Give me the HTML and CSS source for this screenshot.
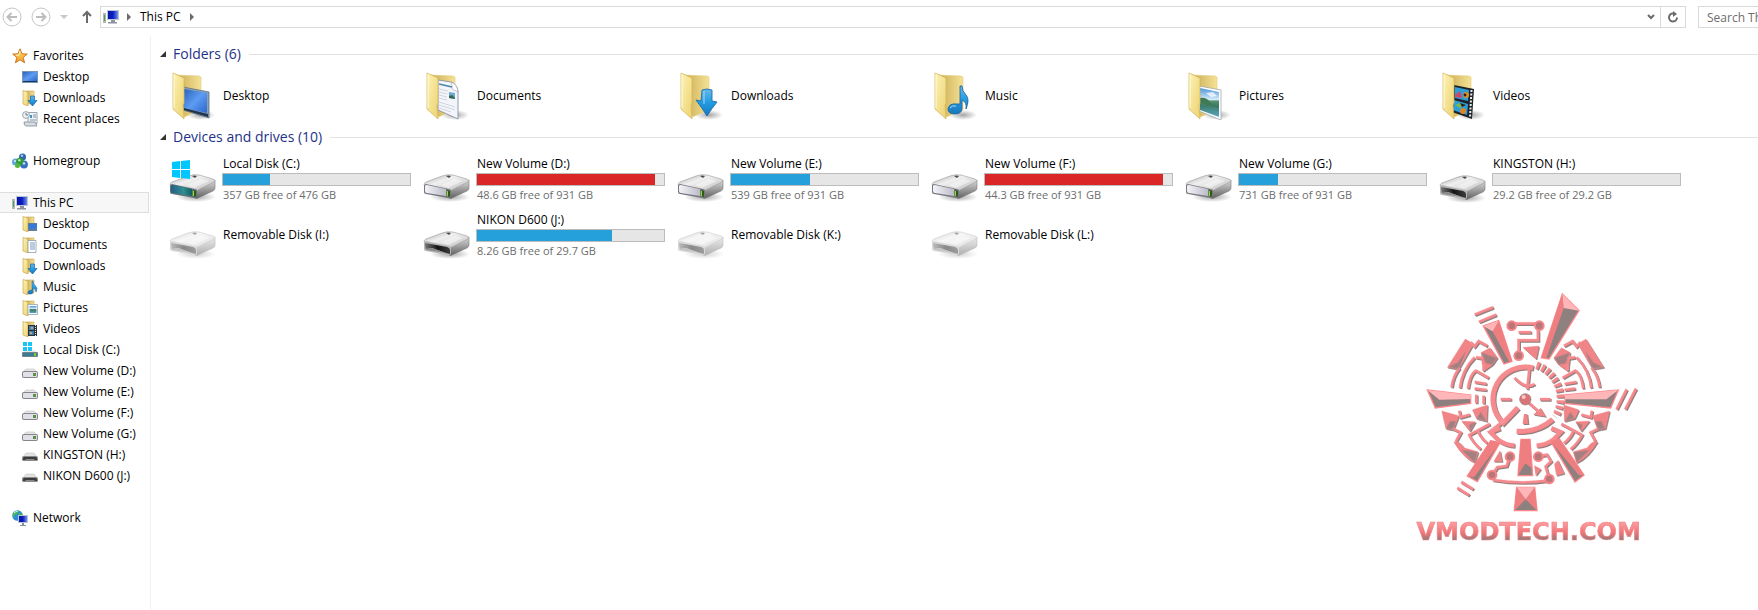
FILE: index.html
```html
<!DOCTYPE html>
<html lang="en">
<head>
    <meta charset="UTF-8">
    <meta name="viewport" content="width=device-width, initial-scale=1.0">
    <title>This PC</title>
    <link rel="stylesheet" href="styles.css">
</head>
<body>

    <!-- Icon definitions -->
    <svg class="defs" width="0" height="0" aria-hidden="true">
        <defs>
            <linearGradient id="flap" x1="0" y1="0" x2="1" y2="1">
                <stop offset="0" stop-color="#fdf3b4"/><stop offset="1" stop-color="#ecd272"/>
            </linearGradient>
            <linearGradient id="back" x1="0" y1="0" x2="1" y2="0">
                <stop offset="0" stop-color="#c9ab52"/><stop offset="1" stop-color="#f5e295"/>
            </linearGradient>
            <linearGradient id="screen" x1="0" y1="0" x2="1" y2="1">
                <stop offset="0" stop-color="#2c62bd"/><stop offset="0.5" stop-color="#5c9cf2"/><stop offset="1" stop-color="#2d66cc"/>
            </linearGradient>
            <linearGradient id="blue" x1="0" y1="0" x2="0" y2="1">
                <stop offset="0" stop-color="#66b8ea"/><stop offset="0.5" stop-color="#239be3"/><stop offset="1" stop-color="#1a76ba"/>
            </linearGradient>
            <linearGradient id="sky" x1="0" y1="0" x2="0" y2="1">
                <stop offset="0" stop-color="#4a94dc"/><stop offset="0.4" stop-color="#d6ebf8"/><stop offset="0.45" stop-color="#57926f"/><stop offset="0.6" stop-color="#3c7d6a"/><stop offset="1" stop-color="#5ba5c4"/>
            </linearGradient>
            <linearGradient id="metal" x1="0" y1="0" x2="1" y2="1">
                <stop offset="0" stop-color="#a8a8a8"/><stop offset="0.4" stop-color="#f0f0f0"/><stop offset="1" stop-color="#bcbcbc"/>
            </linearGradient>
            <linearGradient id="side" x1="0" y1="0" x2="0" y2="1">
                <stop offset="0" stop-color="#dcdcdc"/><stop offset="1" stop-color="#5f5f5f"/>
            </linearGradient>
            <linearGradient id="face" x1="0" y1="0" x2="1" y2="0">
                <stop offset="0" stop-color="#f3f3f8"/><stop offset="1" stop-color="#bcbcc9"/>
            </linearGradient>
            <linearGradient id="teal" x1="0" y1="0" x2="1" y2="0">
                <stop offset="0" stop-color="#245f87"/><stop offset="0.6" stop-color="#2f8f92"/><stop offset="1" stop-color="#155c60"/>
            </linearGradient>
            <linearGradient id="slot" x1="0" y1="0" x2="1" y2="0">
                <stop offset="0" stop-color="#777"/><stop offset="0.5" stop-color="#151515"/><stop offset="1" stop-color="#3c3c3c"/>
            </linearGradient>
            <radialGradient id="ground">
                <stop offset="0" stop-color="#000" stop-opacity="0.35"/><stop offset="1" stop-color="#000" stop-opacity="0"/>
            </radialGradient>
            <linearGradient id="star" x1="0" y1="0" x2="0" y2="1">
                <stop offset="0" stop-color="#ffe26a"/><stop offset="1" stop-color="#f59a22"/>
            </linearGradient>
            <linearGradient id="monitor" x1="0" y1="0" x2="1" y2="0">
                <stop offset="0" stop-color="#0a17a8"/><stop offset="0.5" stop-color="#0c1cc0"/><stop offset="1" stop-color="#6f92ee"/>
            </linearGradient>
        </defs>

        <!-- 48px folders -->
        <symbol id="folder" viewBox="0 0 48 48">
            <ellipse cx="33" cy="43" rx="14" ry="5" fill="url(#ground)"/>
            <path d="M8 3 31 4l2 1v33l-17 7z" fill="url(#back)" stroke="#e2cb7c" stroke-width=".6"/>
        </symbol>
        <symbol id="flap-front" viewBox="0 0 48 48">
            <path d="M5 1l11 5v25l-1 2 1 14L5 37z" fill="url(#flap)" stroke="#d5b75c" stroke-width=".8"/>
            <path d="M6 2v34" stroke="#fffbe0" stroke-width="1"/>
        </symbol>
        <symbol id="f-desktop" viewBox="0 0 48 48">
            <use href="#folder"/>
            <path d="M15 15l26 5v26l-26-8z" fill="#8ba0b4" stroke="#5d6f81" stroke-width=".8"/>
            <path d="M16 17l23 4v20l-23-5z" fill="url(#screen)"/>
            <path d="M16 36l24 6v3l-24-7z" fill="#20364f"/>
            <use href="#flap-front"/>
        </symbol>
        <symbol id="f-documents" viewBox="0 0 48 48">
            <use href="#folder"/>
            <path d="M16 8l13 2q6 2 7 9v28l-20-9z" fill="#f3f5fa" stroke="#8793a4" stroke-width=".9"/>
            <path d="M17 12l13 3" stroke="#4a86a8" stroke-width="1.4"/>
            <path d="M17 17l9 2M17 20l8 2M17 23l8 2M17 26l8 2M17 30l16 5M17 33l16 5M17 36l12 4" stroke="#c6cbd9" stroke-width=".8"/>
            <path d="M27 20l6 1v6l-6-1z" fill="#6fa9d0"/>
            <path d="M27 24l3-1 3 3v1l-6-1z" fill="#34684f"/>
            <path d="M29 10q2 5 1 7l6 3q-1-8-7-10z" fill="#fff" stroke="#98a3b2" stroke-width=".6"/>
            <use href="#flap-front"/>
        </symbol>
        <symbol id="f-downloads" viewBox="0 0 48 48">
            <use href="#folder"/>
            <use href="#flap-front"/>
            <path d="M26 18q5-2 10 0v11l5 1q-5 6-10 14-5-8-11-16l5 1z" fill="url(#blue)" stroke="#1d6fae" stroke-width=".9"/>
            <path d="M28 19v13" stroke="#a5dafa" stroke-width="1.4" opacity=".7"/>
        </symbol>
        <symbol id="f-music" viewBox="0 0 48 48">
            <use href="#folder"/>
            <use href="#flap-front"/>
            <path d="M30 14h2q0 5 4 9t0 14q1-7-4-9v8q0 6-7 6t-7-5q1-6 9-5h3z" fill="url(#blue)" stroke="#2469a0" stroke-width=".9"/>
            <path d="M20 36q2-3 6-2" stroke="#a9dcf8" fill="none"/>
        </symbol>
        <symbol id="f-pictures" viewBox="0 0 48 48">
            <use href="#folder"/>
            <path d="M15 14l22 4v30l-22-9z" fill="#fff" stroke="#9fa9b3" stroke-width=".8"/>
            <path d="M16 16l19 4v25l-19-7z" fill="url(#sky)"/>
            <path d="M16 26q6-1 10 4t9 4v2l-19-5z" fill="#3f7a55"/>
            <path d="M22 21l7-1 4 4-6 1z" fill="#fff" opacity=".7"/>
            <use href="#flap-front"/>
        </symbol>
        <symbol id="f-videos" viewBox="0 0 48 48">
            <use href="#folder"/>
            <path d="M16 13l20 4-2 30-20-7z" fill="#1d2429"/>
            <path d="M17 15l14 3-1 11-13-3zM16 28l14 4-1 11-14-5z" fill="#2f9ed8"/>
            <path d="M17 23l5-4 2 7-7-1z" fill="#c94a6b"/>
            <circle cx="28" cy="23" r="3" fill="#dd8d28"/><circle cx="27" cy="23" r="1.4" fill="#3a1d18"/>
            <path d="M17 33l5-2 3 3-3 2z" fill="#79b94f"/><circle cx="25" cy="39" r="3" fill="#d9862b"/><path d="M22 31l6 2-4 2z" fill="#2b2020"/>
            <path d="M33.500 18l-1.500 27" stroke="#e9edf0" stroke-width="2" stroke-dasharray="2 1.500"/>
            <use href="#flap-front"/>
        </symbol>

        <!-- 48px drives -->
        <symbol id="drive-body" viewBox="0 0 48 48">
            <ellipse cx="28" cy="42" rx="20" ry="5" fill="url(#ground)"/>
            <path d="M28 35l19-10v8q0 2-2 3l-15 7q-2 1-3 0z" fill="url(#side)" stroke="#7a7a7a" stroke-width=".6"/>
            <path d="M2 30q0-2 2-3l16-6q5-2 11-1l14 4q3 1 1 3l-16 8q-2 1-4 0L4 32z" fill="url(#metal)" stroke="#9a9a9a" stroke-width=".6"/>
            <path d="M26 33l15-7-8-2-14 6z" fill="#fff" opacity=".45"/>
            <path d="M24 21q2-1 5 0l-2 2z" fill="#4b4b4b"/>
        </symbol>
        <symbol id="d-fixed" viewBox="0 0 48 48">
            <use href="#drive-body"/>
            <path d="M2 30l2-1 23 5q2 0 2 2v5q0 3-3 2L4 39q-2 0-2-2z" fill="#77777f"/>
            <path d="M3 31q0-1 2-1l19 4v7L5 38q-2 0-2-2z" fill="url(#face)"/>
            <path d="M25 35l3 1v6l-3-1z" fill="#2c5c14"/><path d="M25 36l1 0v5l-1 0z" fill="#8ce032"/>
        </symbol>
        <symbol id="d-system" viewBox="0 0 48 48">
            <use href="#drive-body"/>
            <path d="M2 30l2-1 23 5q2 0 2 2v5q0 3-3 2L4 39q-2 0-2-2z" fill="#66727a"/>
            <path d="M3 31q0-1 2-1l19 4v7L5 38q-2 0-2-2z" fill="url(#teal)"/>
            <path d="M25 35l3 1v6l-3-1z" fill="#2c5c14"/><path d="M25 36l1 0v5l-1 0z" fill="#8ce032"/>
            <path d="M4 7l8-1v8H4zM13 6l9-1v9h-9zM4 15h8v8l-8-1zM13 15h9v9l-9-1z" fill="#00c8ff"/>
        </symbol>
        <symbol id="d-removable" viewBox="0 0 48 48">
            <g transform="translate(0 1)">
                <use href="#drive-body" width="48" height="48"/>
                <path d="M2 30l2-1 23 5q2 0 2 2v5q0 3-3 2L4 39q-2 0-2-2z" fill="#b5b5b5"/>
                <path d="M3 31l22 4q3 1 3 3v4l-4-1-14-5-6 1q-1-2-1-6z" fill="url(#slot)"/>
                <path d="M4 37l6-1 14 5-19-3z" fill="#8a8a8a"/>
            </g>
        </symbol>

        <!-- 16px navigation icons -->
        <symbol id="n-star" viewBox="0 0 16 16">
            <path d="M8 .8l2 5 5.300.3-4.200 3.400 1.500 5.300L8 11.800l-4.600 3 1.500-5.300L.7 6.100 6 5.800z" fill="url(#star)" stroke="#c9772c" stroke-width="1"/>
            <path d="M8 3l-1 4-3 .4" stroke="#fff6c0" fill="none" stroke-width="1"/>
        </symbol>
        <symbol id="n-screen" viewBox="0 0 16 16">
            <path d="M0 2h16v12H0z" fill="#7896b5"/><path d="M1 3h14v9H1z" fill="url(#screen)"/><path d="M1 12h14v1H1z" fill="#1b3657"/>
        </symbol>
        <symbol id="n-folder" viewBox="0 0 16 16">
            <path d="M4 1h8v13H4z" fill="url(#back)" stroke="#c9aa55" stroke-width=".6"/>
            <path d="M1 .5l5 1.500v14L1 14z" fill="url(#flap)" stroke="#c8a650" stroke-width=".7"/>
        </symbol>
        <symbol id="n-desktop" viewBox="0 0 16 16"><use href="#n-folder"/><path d="M6 7h9v8H6z" fill="#5f7c9a"/><path d="M7 8h8v5H7z" fill="#3878d8"/></symbol>
        <symbol id="n-documents" viewBox="0 0 16 16"><use href="#n-folder"/><path d="M6 3.500h8v12H6z" fill="#fff" stroke="#8b9cb0" stroke-width=".8"/><path d="M8 6h5M8 8h5M8 10h5M8 12h5" stroke="#7699bd" stroke-width="1"/></symbol>
        <symbol id="n-downloads" viewBox="0 0 16 16"><use href="#n-folder"/><path d="M8.500 6h4v4.500H15L10.500 16 6 10.500h2.500z" fill="url(#blue)" stroke="#1769a8" stroke-width=".7"/></symbol>
        <symbol id="n-music" viewBox="0 0 16 16"><use href="#n-folder"/><path d="M10 2h1q0 3 2.500 5t.5 6q0-3-3-4v4q0 2-3 2T6 13q.5-2 4-2z" fill="url(#blue)" stroke="#2469a0" stroke-width=".6"/></symbol>
        <symbol id="n-pictures" viewBox="0 0 16 16"><use href="#n-folder"/><path d="M6 4.500h9.500v10H6z" fill="#fff" stroke="#93a3b3" stroke-width=".8"/><path d="M7.500 6h7v7h-7z" fill="url(#sky)"/></symbol>
        <symbol id="n-videos" viewBox="0 0 16 16"><use href="#n-folder"/><path d="M6 4h9v11H6z" fill="#2a3238"/><path d="M7 5h5v4H7zM7 10h5v4H7z" fill="#3f7fa8"/><path d="M9 6h2v2H9zM8 11h2v2H8z" fill="#c4a184"/><path d="M13.500 4v11" stroke="#e8ecef" stroke-width="1" stroke-dasharray="1 1"/></symbol>
        <symbol id="n-recent" viewBox="0 0 16 16">
            <path d="M6 1.500h9v11H6z" fill="#f1f4f7" stroke="#8e9aa6" stroke-width=".9"/><path d="M8 4h2v3H8z" fill="#4393c4"/><path d="M11 4h3M11 6h3M8 9h6" stroke="#7d95a8"/>
            <path d="M2 11h11l2 4H4q-2 0-2-4z" fill="#d7dde2" stroke="#7f8b96" stroke-width=".8"/>
            <circle cx="4" cy="4" r="3.400" fill="#eef1f4" stroke="#9aa5b0"/><path d="M4 2v2h2" fill="none" stroke="#63707c" stroke-width=".9"/>
        </symbol>
        <symbol id="n-homegroup" viewBox="0 0 16 16">
            <circle cx="3.500" cy="9" r="3.500" fill="#5ba6dc"/><circle cx="10.500" cy="4" r="3.500" fill="#2f66b2"/><circle cx="12" cy="11.500" r="3.900" fill="#356fc0"/><circle cx="8" cy="8.500" r="3.800" fill="#2f9a38"/><circle cx="5.500" cy="12.500" r="2.500" fill="#57b53f"/>
            <circle cx="10" cy="2.700" r="1.200" fill="#a8cbef"/><circle cx="7.300" cy="7.200" r="1.300" fill="#b7ecaa"/><circle cx="12" cy="10.400" r="1.300" fill="#b2d3f4"/><circle cx="3" cy="8" r="1.100" fill="#d5ecfa"/>
        </symbol>
        <symbol id="n-pc" viewBox="0 0 16 16">
            <path d="M0 4h3v10H0z" fill="#aeb8b4"/><path d="M1 6h1v6H1z" fill="#4e9e54"/>
            <path d="M4 1h12v10H4z" fill="#bcc6d2"/><path d="M5 2h10v8H5z" fill="url(#monitor)"/><path d="M8 11h4v2H8zM5 13h9v1.500H5z" fill="#8c949e"/>
        </symbol>
        <symbol id="n-network" viewBox="0 0 16 16">
            <circle cx="5.500" cy="5.500" r="5.300" fill="#2d8fd6"/><path d="M1 3q3-3 6-2.500L5 4 3 5 1 8zM7 3l4 1-2 4-3 1z" fill="#48b948"/><path d="M2 3q2-2 4-2" stroke="#d3f1fa" fill="none"/>
            <path d="M6 5h10v8H6z" fill="#b7c3d4"/><path d="M7 6h8v6H7z" fill="url(#monitor)"/><path d="M10 13h2v2h2v1H8v-1h2z" fill="#848e9c"/>
        </symbol>
        <symbol id="n-drive" viewBox="0 0 16 16">
            <path d="M4 6h8l3 3H1z" fill="#e6e6e6" stroke="#b0b0b0" stroke-width=".5"/><path d="M2 8h12q2 0 2 2v3q0 2-2 2H2q-2 0-2-2v-3q0-2 2-2z" fill="#85858c"/><path d="M2 9h12q1 0 1 1v3q0 1-1 1H2q-1 0-1-1v-3q0-1 1-1z" fill="#e0e0e9"/><path d="M11 10h3v3h-3z" fill="#5c8f45"/>
        </symbol>
        <symbol id="n-card" viewBox="0 0 16 16">
            <path d="M4 6h8l3 4H1z" fill="#e2e2e2" stroke="#b8b8b8" stroke-width=".5"/><path d="M2 9h12q2 0 2 2v2q0 1-2 1H2q-2 0-2-1v-2q0-2 2-2z" fill="#8a8a8a"/><path d="M2 10h12q1 0 1 3h-2l-1-1H4l-1 1H1q0-3 1-3z" fill="#3c3c3c"/>
        </symbol>
        <symbol id="n-system" viewBox="0 0 16 16">
            <path d="M4 8h8l3 2H1z" fill="#e6e6e6"/><path d="M1 10h14q1 0 1 1v3q0 1-1 1H1q-1 0-1-1v-3q0-1 1-1z" fill="#71808a"/><path d="M1 11h14v3H1z" fill="#3a7c92"/><path d="M12 11h2v3h-2z" fill="#7bd134"/>
            <path d="M1 0h4v4H1zM6 0h4v4H6zM1 5h4v4H1zM6 5h4v4H6z" fill="#1cc4f5"/>
        </symbol>
    </svg>

    <header class="toolbar">
        <nav class="history" aria-label="History">
            <button class="nav-btn" aria-label="Back">
                <svg width="20" height="20" viewBox="0 0 20 20"><circle cx="10" cy="10" r="9"/><path d="M15 10H6M9.500 6L5.500 10l4 4"/></svg>
            </button>
            <button class="nav-btn" aria-label="Forward">
                <svg width="20" height="20" viewBox="0 0 20 20"><circle cx="10" cy="10" r="9"/><path d="M5 10h9M10.500 6l4 4-4 4"/></svg>
            </button>
            <button class="nav-btn recent" aria-label="Recent locations">
                <svg width="8" height="4" viewBox="0 0 8 4"><path d="M0 0h8L4 4z"/></svg>
            </button>
            <button class="nav-btn up" aria-label="Up">
                <svg width="12" height="14" viewBox="0 0 12 14"><path d="M6 13V2M2 6l4-4 4 4"/></svg>
            </button>
        </nav>
        <div class="address">
            <svg class="icon-sm"><use href="#n-pc"/></svg>
            <svg class="crumb-arrow" viewBox="0 0 4 8"><path d="M0 0l4 4-4 4z"/></svg>
            <a href="#">This PC</a>
            <svg class="crumb-arrow" viewBox="0 0 4 8"><path d="M0 0l4 4-4 4z"/></svg>
            <button class="addr-btn drop" aria-label="Previous locations">
                <svg width="8" height="8" viewBox="0 0 8 8"><path d="M1 2l3 3 3-3"/></svg>
            </button>
            <button class="addr-btn refresh" aria-label="Refresh">
                <svg width="12" height="12" viewBox="0 0 12 12"><path d="M7 2.500H5.500a4 4 0 1 0 4.500 4"/><path class="tip" d="M6 0l4 3-4 3z"/></svg>
            </button>
        </div>
        <input class="search" type="text" placeholder="Search This PC" aria-label="Search This PC">
    </header>

    <div class="window">
        <nav class="sidebar" aria-label="Navigation">
            <ul>
                <li><a href="#"><svg class="icon-sm"><use href="#n-star"/></svg>Favorites</a>
                    <ul>
                        <li><a href="#"><svg class="icon-sm"><use href="#n-screen"/></svg>Desktop</a></li>
                        <li><a href="#"><svg class="icon-sm"><use href="#n-downloads"/></svg>Downloads</a></li>
                        <li><a href="#"><svg class="icon-sm"><use href="#n-recent"/></svg>Recent places</a></li>
                    </ul>
                </li>
                <li><a href="#"><svg class="icon-sm"><use href="#n-homegroup"/></svg>Homegroup</a></li>
                <li><a href="#" class="selected"><svg class="icon-sm"><use href="#n-pc"/></svg>This PC</a>
                    <ul>
                        <li><a href="#"><svg class="icon-sm"><use href="#n-desktop"/></svg>Desktop</a></li>
                        <li><a href="#"><svg class="icon-sm"><use href="#n-documents"/></svg>Documents</a></li>
                        <li><a href="#"><svg class="icon-sm"><use href="#n-downloads"/></svg>Downloads</a></li>
                        <li><a href="#"><svg class="icon-sm"><use href="#n-music"/></svg>Music</a></li>
                        <li><a href="#"><svg class="icon-sm"><use href="#n-pictures"/></svg>Pictures</a></li>
                        <li><a href="#"><svg class="icon-sm"><use href="#n-videos"/></svg>Videos</a></li>
                        <li><a href="#"><svg class="icon-sm"><use href="#n-system"/></svg>Local Disk (C:)</a></li>
                        <li><a href="#"><svg class="icon-sm"><use href="#n-drive"/></svg>New Volume (D:)</a></li>
                        <li><a href="#"><svg class="icon-sm"><use href="#n-drive"/></svg>New Volume (E:)</a></li>
                        <li><a href="#"><svg class="icon-sm"><use href="#n-drive"/></svg>New Volume (F:)</a></li>
                        <li><a href="#"><svg class="icon-sm"><use href="#n-drive"/></svg>New Volume (G:)</a></li>
                        <li><a href="#"><svg class="icon-sm"><use href="#n-card"/></svg>KINGSTON (H:)</a></li>
                        <li><a href="#"><svg class="icon-sm"><use href="#n-card"/></svg>NIKON D600 (J:)</a></li>
                    </ul>
                </li>
                <li><a href="#"><svg class="icon-sm"><use href="#n-network"/></svg>Network</a></li>
            </ul>
        </nav>

        <main class="content">
            <section>
                <h2><svg class="collapse" viewBox="0 0 6 6"><path d="M6 0v6H0z"/></svg>Folders (6)</h2>
                <div class="tiles folders">
                    <a href="#" class="tile"><svg class="icon-lg"><use href="#f-desktop"/></svg><span class="name">Desktop</span></a>
                    <a href="#" class="tile"><svg class="icon-lg"><use href="#f-documents"/></svg><span class="name">Documents</span></a>
                    <a href="#" class="tile"><svg class="icon-lg"><use href="#f-downloads"/></svg><span class="name">Downloads</span></a>
                    <a href="#" class="tile"><svg class="icon-lg"><use href="#f-music"/></svg><span class="name">Music</span></a>
                    <a href="#" class="tile"><svg class="icon-lg"><use href="#f-pictures"/></svg><span class="name">Pictures</span></a>
                    <a href="#" class="tile"><svg class="icon-lg"><use href="#f-videos"/></svg><span class="name">Videos</span></a>
                </div>
            </section>

            <section>
                <h2><svg class="collapse" viewBox="0 0 6 6"><path d="M6 0v6H0z"/></svg>Devices and drives (10)</h2>
                <div class="tiles drives">
                    <a href="#" class="tile">
                        <svg class="icon-lg"><use href="#d-system"/></svg>
                        <span class="info"><span class="name">Local Disk (C:)</span><span class="bar"><span class="used" style="width: 25%"></span></span><span class="free">357 GB free of 476 GB</span></span>
                    </a>
                    <a href="#" class="tile">
                        <svg class="icon-lg"><use href="#d-fixed"/></svg>
                        <span class="info"><span class="name">New Volume (D:)</span><span class="bar"><span class="used full" style="width: 95%"></span></span><span class="free">48.6 GB free of 931 GB</span></span>
                    </a>
                    <a href="#" class="tile">
                        <svg class="icon-lg"><use href="#d-fixed"/></svg>
                        <span class="info"><span class="name">New Volume (E:)</span><span class="bar"><span class="used" style="width: 42%"></span></span><span class="free">539 GB free of 931 GB</span></span>
                    </a>
                    <a href="#" class="tile">
                        <svg class="icon-lg"><use href="#d-fixed"/></svg>
                        <span class="info"><span class="name">New Volume (F:)</span><span class="bar"><span class="used full" style="width: 95%"></span></span><span class="free">44.3 GB free of 931 GB</span></span>
                    </a>
                    <a href="#" class="tile">
                        <svg class="icon-lg"><use href="#d-fixed"/></svg>
                        <span class="info"><span class="name">New Volume (G:)</span><span class="bar"><span class="used" style="width: 21%"></span></span><span class="free">731 GB free of 931 GB</span></span>
                    </a>
                    <a href="#" class="tile">
                        <svg class="icon-lg"><use href="#d-removable"/></svg>
                        <span class="info"><span class="name">KINGSTON (H:)</span><span class="bar"><span class="used" style="width: 0%"></span></span><span class="free">29.2 GB free of 29.2 GB</span></span>
                    </a>
                    <a href="#" class="tile"><svg class="icon-lg empty"><use href="#d-removable"/></svg><span class="name">Removable Disk (I:)</span></a>
                    <a href="#" class="tile">
                        <svg class="icon-lg"><use href="#d-removable"/></svg>
                        <span class="info"><span class="name">NIKON D600 (J:)</span><span class="bar"><span class="used" style="width: 72%"></span></span><span class="free">8.26 GB free of 29.7 GB</span></span>
                    </a>
                    <a href="#" class="tile"><svg class="icon-lg empty"><use href="#d-removable"/></svg><span class="name">Removable Disk (K:)</span></a>
                    <a href="#" class="tile"><svg class="icon-lg empty"><use href="#d-removable"/></svg><span class="name">Removable Disk (L:)</span></a>
                </div>
            </section>
        </main>
    </div>

    <!-- Watermark over the window -->
    <svg class="watermark" viewBox="0 0 780 840" role="img" aria-label="VMODTECH.COM">
        <defs>
            <linearGradient id="letters" x1="0" y1="0" x2="0" y2="1">
                <stop offset="0.2" stop-color="#fa9a9c"/><stop offset="0.55" stop-color="#ee7476"/><stop offset="0.8" stop-color="#8b7c7c"/>
            </linearGradient>
            <g id="half">
                <path d="M143 262l53-84 24 14-44 76zM244 218l26-14 22 30-14 20-28 20-4-30zM126 394l50 14-16 42-22-4zM162 486q16-4 30 18l42 12-10 32q-34-14-62-62zM218 390l44-14-2 48-30-8zM186 424l40 2-16 28z" fill="currentColor" stroke-width="2"/>
                <path d="M212 186l12 14 12-16 26 14M228 232l24 4"/>
                <path d="M155 322q4-34 24-58M180 324q6-54 44-92M204 326q6-44 24-54l38 22M224 306l36 6M250 272l4-16"/>
                <path d="M158 446l24 12-14 26M178 392l4 20 28-8"/>
                <path d="M206 462q14 28 36 46M210 464l60-32M234 454q8 20 28 36"/>
                <path d="M300 445l-28 12 22 22q22 16 50 18" stroke-width="13"/>
            </g>
            <g id="half-shade">
                <path d="M143 262l30-14 25-34-22 54zM244 218l48 16-14 20-20-4zM138 446l12-22 18 0-8 26zM186 510l46 6-8 32zM230 416l12-20 18 28zM210 454l-2-20 18-8z"/>
            </g>
            <g id="mark" stroke-width="8">
                <use href="#half"/>
                <use href="#half" transform="matrix(-1 0 0 1 754 0)"/>
                <path d="M224 104l56-22M237 126l52-22M650 388l30-60M676 388l32-62M184 606l36 22M172 624l36 22"/>
                <path d="M335 137l10-6h66l7 6M356 227v-46h58v-30M356 157h38M330 530l-10 28-28 4-15 22M415 530l26-6 12 20-16 16 10 36M278 600q84 14 166 2"/>
                <path d="M370 203l46-4-8 38zM300 514l6 30-24 0zM404 558l18 10-14 18zM464 552l10-10 18 38-22 6z" fill="currentColor" stroke-width="2"/>
                <path d="M400 264A97 97 0 0 0 310 429l44-46" stroke-width="15"/>
                <path d="M316 420l-44 34" stroke-width="10"/>
                <path d="M350 454q64 4 108-36" stroke-width="15"/>
                <path d="M410 256a105 105 0 0 1 56 154" stroke-width="22" stroke-dasharray="9 8"/>
                <path d="M388 268l-6 60M344 294q34 36 60 18M302 358h32M420 358h32M229 344v26M251 347v24M224 326l36 4M526 326l-32 4"/>
                <path d="M374 358l46 40"/>
                <path d="M400 404l22-20 16 26zM372 402h10l3 30h-17z" fill="currentColor" stroke="none"/>
            </g>
        </defs>
        <use href="#mark" class="bevel" transform="translate(3 3)"/>
        <use href="#mark" class="base"/>
        <g class="shade">
            <use href="#half-shade"/>
            <use href="#half-shade" transform="matrix(-1 0 0 1 754 0)"/>
        </g>
        <use href="#mark" class="shine" transform="translate(-1 -2)"/>
        <g class="nodes">
            <circle cx="335" cy="137" r="13"/><circle cx="418" cy="137" r="13"/><circle cx="356" cy="227" r="13"/>
            <circle cx="330" cy="530" r="13"/><circle cx="276" cy="585" r="13"/><circle cx="415" cy="530" r="13"/><circle cx="448" cy="597" r="13"/>
        </g>
        <!-- spikes: shaded body, then lit facets -->
        <g class="spikes">
            <path d="M487 42l50 50-90 145-23-4zM250 138l46-16 40 122-24 8zM82 330l130 15v25l-106 14zM495 345l160-15-23 54-137-14z"/>
            <path d="M363 478h27l8 109h-44zM350 622h54l7 70h-68zM272 482l28 6-68 117-30-17zM452 484l26-8 74 109-27 21z"/>
        </g>
        <g class="facet">
            <path d="M487 42l4 42-52 150-15-1zM250 138l46-16 40 122-8 2-50-92zM363 478h27l4 86-18-14-22 36zM343 692l7-70 27 36zM411 692l-7-70-27 36zM272 482l28 6-78 104-20-4zM452 484l26-8 74 109-16 0z"/>
        </g>
        <g class="light">
            <path d="M82 330l130 15v12l-94 2zM495 345l160-15-36 28H495zM350 622h54l-27 36zM487 42l50 50-46-8zM250 138l46-16-18 32z"/>
        </g>
        <circle cx="376" cy="358" r="17" fill="#d77678" stroke="#8d7e7e" stroke-width="2"/>
        <circle cx="371" cy="351" r="6" fill="#ffc4c5"/>
        <text x="386" y="779" text-anchor="middle">VMODTECH.COM</text>
    </svg>

</body>
</html>
```

FILE: styles.css
```css
/* Base */
* {
    box-sizing: border-box;
}

body {
    margin: 0;
    min-height: 100vh;
    display: flex;
    flex-direction: column;
    position: relative;
    overflow-x: hidden;
    background-color: #fff;
    color: #000;
    font-family: "Open Sans", "Noto Sans", sans-serif;
    font-size: 12px;
    line-height: 16px;
}

a {
    color: inherit;
    text-decoration: none;
}

button {
    border: none;
    background: none;
    padding: 0;
    display: flex;
    align-items: center;
    justify-content: center;
}

ul {
    list-style: none;
    margin: 0;
    padding: 0;
}

.defs {
    position: absolute;
}

.icon-sm {
    width: 16px;
    height: 16px;
    flex: none;
}

.icon-lg {
    width: 48px;
    height: 48px;
    flex: none;
}

.icon-lg.empty {
    opacity: 0.5;
}

/* Toolbar */
.toolbar {
    display: flex;
    align-items: center;
    height: 36px;
    padding: 0 0 2px 2px;
}

.history {
    display: flex;
    align-items: center;
    width: 98px;
    gap: 9px;
    flex: none;
}

.nav-btn svg {
    fill: none;
    stroke: #bdbdbd;
    stroke-width: 2;
}

.nav-btn circle {
    stroke: #c6c6c6;
    stroke-width: 1;
}

.nav-btn.recent svg {
    fill: #c8c8c8;
    stroke: none;
}

.nav-btn.up {
    margin-left: 4px;
}

.nav-btn.up svg {
    stroke: #6a6a6a;
}

.address {
    flex: 1;
    display: flex;
    align-items: center;
    gap: 8px;
    height: 22px;
    padding-left: 2px;
    border: 1px solid #d9d9d9;
}

.address a {
    margin: 0 1px;
}

.crumb-arrow {
    width: 4px;
    height: 8px;
    fill: #6a6a6a;
}

.addr-btn {
    height: 20px;
    width: 25px;
}

.addr-btn svg {
    fill: none;
    stroke: #6a6a6a;
    stroke-width: 2;
}

.addr-btn .tip {
    fill: #6a6a6a;
    stroke: none;
}

.drop {
    width: 18px;
    margin-left: auto;
}

.drop + .refresh {
    margin-left: -8px;
    border-left: 1px solid #d9d9d9;
}

.search {
    flex: none;
    width: 60px;
    height: 22px;
    margin-left: 12px;
    padding: 0 0 0 8px;
    border: 1px solid #d9d9d9;
    border-right: none;
    font: inherit;
}

.search::placeholder {
    color: #6d6d6d;
}

/* Layout */
.window {
    flex: 1;
    display: flex;
}

.sidebar {
    flex: none;
    width: 151px;
    padding: 9px 1px 0 0;
    border-right: 1px solid #f0f0f0;
}

.sidebar > ul > li {
    margin-bottom: 21px;
}

.sidebar a {
    display: flex;
    align-items: center;
    gap: 5px;
    height: 21px;
    padding-left: 12px;
    white-space: nowrap;
}

.sidebar ul ul a {
    padding-left: 22px;
}

.sidebar .selected {
    border: 1px solid #dedede;
    border-left: none;
    background-color: #f7f7f7;
}

/* Content */
.content {
    flex: 1;
    padding: 7px 0 0 9px;
}

h2 {
    display: flex;
    align-items: center;
    margin: 0;
    height: 22px;
    color: #1e3287;
    font-size: 14px;
    font-weight: normal;
}

h2::after {
    content: "";
    flex: 1;
    height: 1px;
    margin-left: 8px;
    background-color: #e2e2e2;
}

.collapse {
    width: 6px;
    height: 6px;
    margin-right: 7px;
    fill: #333;
}

.tiles {
    display: grid;
    grid-template-columns: repeat(auto-fill, minmax(220px, 1fr));
    margin: 0 66px 0 8px;
}

.folders {
    grid-auto-rows: 61px;
}

.drives {
    grid-auto-rows: 56px;
    padding-top: 3px;
}

.tile {
    display: flex;
    align-items: center;
    gap: 6px;
    padding-right: 11px;
}

.name {
    padding-left: 1px;
}

.info {
    flex: 1;
    display: flex;
    flex-direction: column;
}

.bar {
    height: 13px;
    margin: 1px 0;
    border: 1px solid #bcbcbc;
    background-color: #e6e6e6;
}

.used {
    display: block;
    height: 100%;
    background-color: #26a0da;
}

.used.full {
    background-color: #da2626;
}

.free {
    padding-left: 1px;
    color: #6d6d6d;
    font-size: 11px;
}

/* Watermark */
.watermark {
    position: absolute;
    top: 280px;
    right: 98px;
    width: 260px;
    height: 280px;
    pointer-events: none;
}

.bevel {
    color: #8f8080;
    fill: none;
    stroke: #8f8080;
}

.base {
    color: #f08487;
    fill: none;
    stroke: #f27f83;
}

.shade {
    fill: #8f8080;
    opacity: 0.8;
}

.shine {
    color: transparent;
    fill: none;
    stroke: #ffb0b3;
    stroke-opacity: 0.25;
}

.nodes {
    fill: #b97779;
    stroke: #f58589;
    stroke-width: 6;
}

.spikes {
    fill: #8f8080;
    stroke: #ff868a;
    stroke-width: 4;
}

.facet {
    fill: #ef7e81;
}

.light {
    fill: #ffb6b8;
}

.watermark text {
    font-family: "DejaVu Sans", sans-serif;
    font-size: 72px;
    font-weight: bold;
    fill: url(#letters);
    stroke: #f58589;
    stroke-width: 2;
}
```
